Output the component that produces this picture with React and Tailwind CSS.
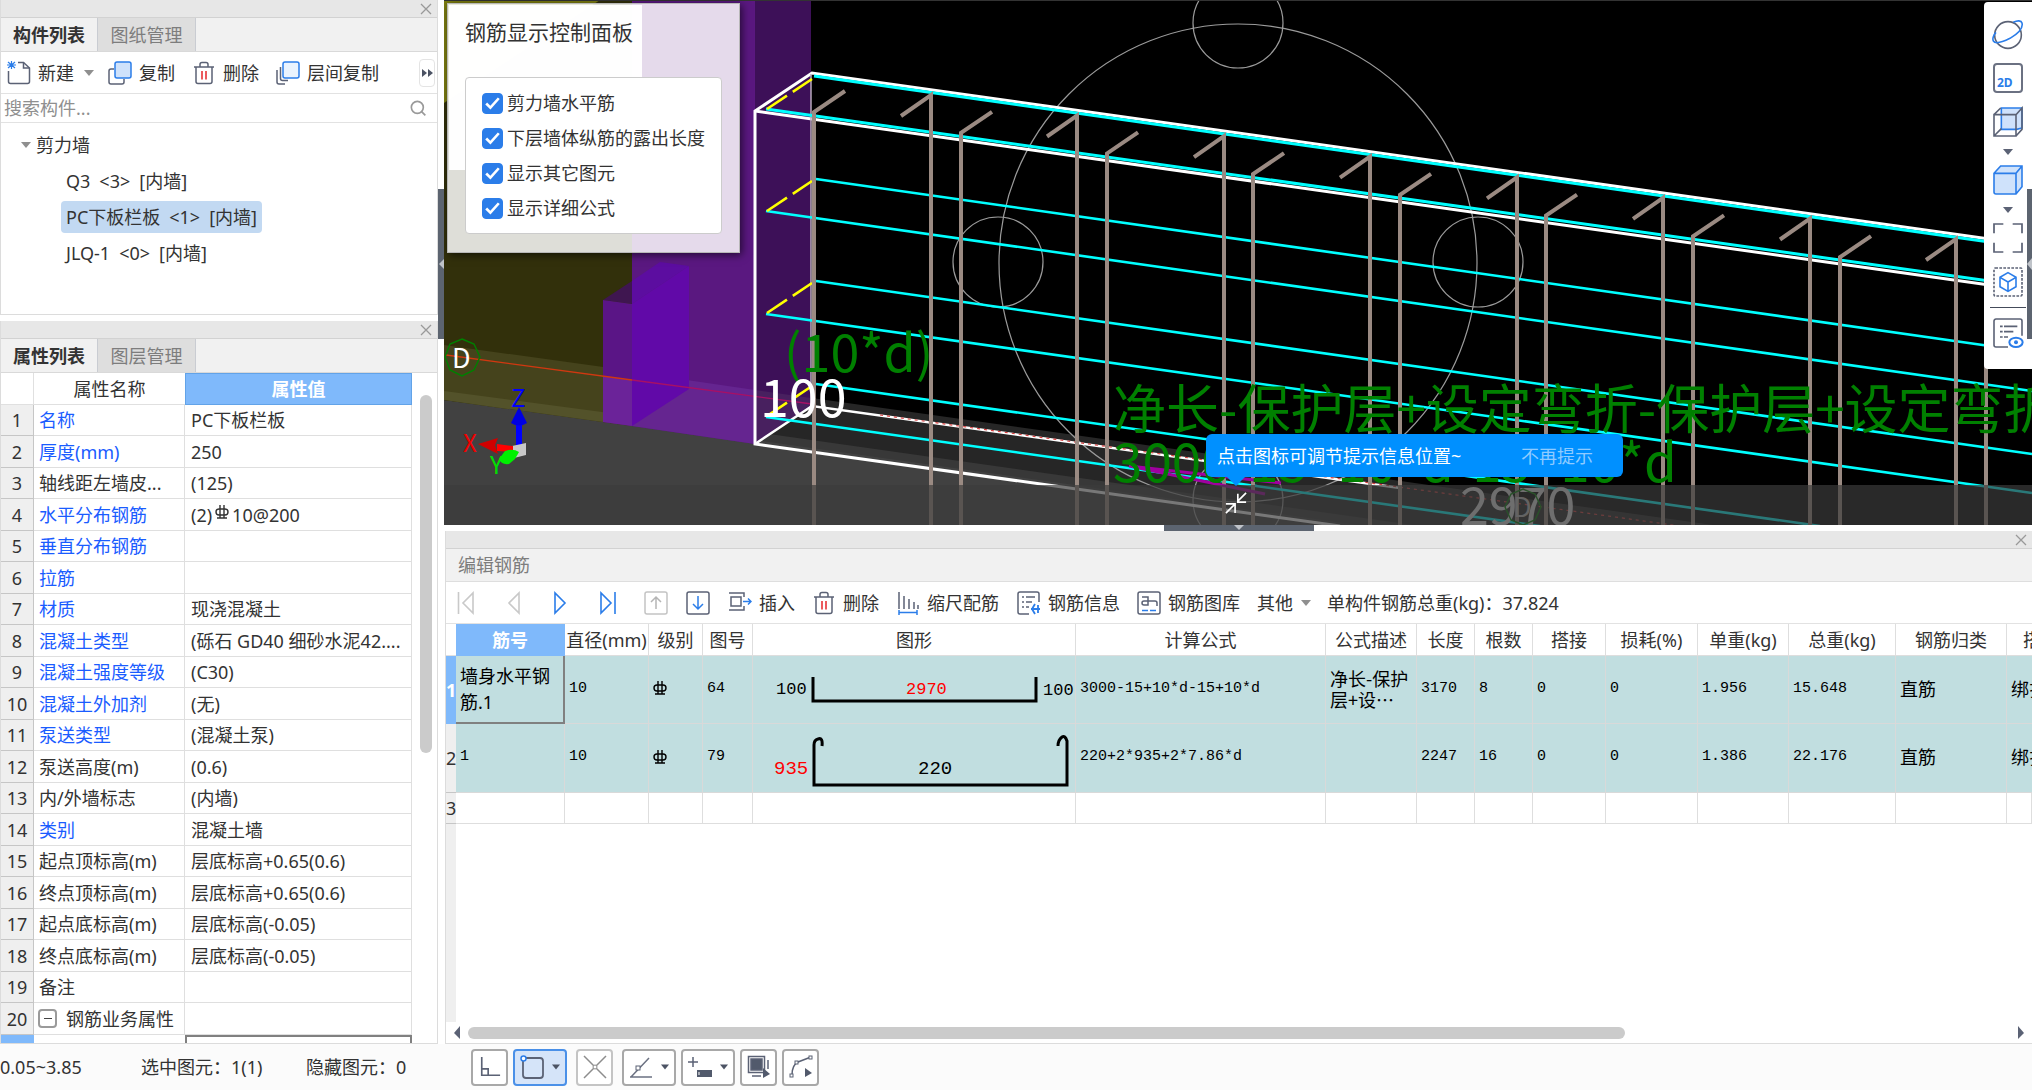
import React, { useState } from "react";

const properties = [
  { name: "名称", value: "PC下板栏板", key: true },
  { name: "厚度(mm)", value: "250", key: true },
  { name: "轴线距左墙皮...", value: "(125)" },
  { name: "水平分布钢筋", value: "rebar", key: true },
  { name: "垂直分布钢筋", value: "", key: true },
  { name: "拉筋", value: "", key: true },
  { name: "材质", value: "现浇混凝土", key: true },
  { name: "混凝土类型", value: "(砾石 GD40 细砂水泥42....", key: true },
  { name: "混凝土强度等级", value: "(C30)", key: true },
  { name: "混凝土外加剂", value: "(无)", key: true },
  { name: "泵送类型", value: "(混凝土泵)", key: true },
  { name: "泵送高度(m)", value: "(0.6)" },
  { name: "内/外墙标志", value: "(内墙)" },
  { name: "类别", value: "混凝土墙", key: true },
  { name: "起点顶标高(m)", value: "层底标高+0.65(0.6)" },
  { name: "终点顶标高(m)", value: "层底标高+0.65(0.6)" },
  { name: "起点底标高(m)", value: "层底标高(-0.05)" },
  { name: "终点底标高(m)", value: "层底标高(-0.05)" },
  { name: "备注", value: "" },
  { name: "钢筋业务属性", value: "", group: true },
];

const components = [
  { name: "Q3", count: "<3>", kind: "[内墙]" },
  { name: "PC下板栏板", count: "<1>", kind: "[内墙]" },
  { name: "JLQ-1", count: "<0>", kind: "[内墙]" },
];

const headers = [
  "直径(mm)", "级别", "图号", "图形", "计算公式", "公式描述", "长度", "根数",
  "搭接", "损耗(%)", "单重(kg)", "总重(kg)", "钢筋归类",
];

const bars = [
  {
    name: "墙身水平钢筋.1",
    shape: "64",
    formula: "3000-15+10*d-15+10*d",
    note: ["净长-保护", "层+设…"],
    length: "3170",
    count: "8",
    unit: "1.956",
    total: "15.648",
  },
  {
    name: "1",
    shape: "79",
    formula: "220+2*935+2*7.86*d",
    note: [],
    length: "2247",
    count: "16",
    unit: "1.386",
    total: "22.176",
  },
];

const mono = "font-['Liberation_Mono','Noto_Sans_CJK_SC',monospace] text-[15px]";

/* ---------- icons ---------- */

const Icon = ({ size = 24, children, className = "" }) => (
  <svg
    width={size}
    height={size}
    viewBox="0 0 24 24"
    fill="none"
    stroke="#5b6275"
    strokeWidth="1.5"
    className={`shrink-0 ${className}`}
    aria-hidden="true"
  >
    {children}
  </svg>
);

const NewIcon = () => (
  <Icon>
    <path d="M1.500 10v10.500a2 2 0 0 0 2 2h17a2 2 0 0 0 2-2V7l-6-5.500H11" />
    <path d="M16.500 1.500V7h6" />
    <path d="M1 1l7 6M8 1L1 7M4.500 0v8M0 4h9" stroke="#2b7de9" strokeWidth="1.200" />
  </Icon>
);

const CopyIcon = () => (
  <Icon>
    <path d="M6 8H3a2 2 0 0 0-2 2v11a2 2 0 0 0 2 2h11a2 2 0 0 0 2-2v-3" />
    <rect x="7" y="1" width="16" height="16" rx="2" fill="#cfe2fb" stroke="#2b7de9" />
  </Icon>
);

const FloorCopyIcon = () => (
  <Icon>
    <path d="M1 9v12a2 2 0 0 0 2 2h6M4.500 6v11.500a2 2 0 0 0 2 2H12" />
    <rect x="7" y="1" width="16" height="16" rx="2" fill="#eaf3fe" stroke="#2b7de9" />
  </Icon>
);

const TrashIcon = () => (
  <Icon>
    <path d="M2 6h20M8 6V3.500a2 2 0 0 1 2-2h4a2 2 0 0 1 2 2V6M4 6v14.500a2 2 0 0 0 2 2h12a2 2 0 0 0 2-2V6" />
    <path d="M10 10v8.500M14 10v8.500" stroke="#e5262b" />
  </Icon>
);

const InsertIcon = () => (
  <Icon>
    <path d="M1 2h15v4M1 19h15v-4M3 6h10v9H3z" />
    <path d="M15 10.500h8M20 7.500l3 3-3 3" stroke="#2b7de9" />
  </Icon>
);

const ScaleIcon = () => (
  <Icon>
    <path d="M3 1v17M8 5v13M13 8v10M18 11v7M22 14v4" />
    <path d="M3 21.500h18M3 19v5M21 19v5" stroke="#2b7de9" />
  </Icon>
);

const InfoIcon = () => (
  <Icon>
    <path d="M22 11V3a2 2 0 0 0-2-2H3a2 2 0 0 0-2 2v18a2 2 0 0 0 2 2h9" />
    <path d="M5 6h2M9 6h9M5 11h2M9 11h6M5 16h2M9 16h3" />
    <path d="M14 18h9M18 13l-3 5 3 5M21 14v8" stroke="#2b7de9" strokeWidth="1.800" />
  </Icon>
);

const LibraryIcon = () => (
  <Icon>
    <rect x="1" y="1" width="22" height="22" rx="2" />
    <path d="M5 6h6v8H7a2 2 0 0 1 0-4h11a2 2 0 0 1 2 2v3" />
    <path d="M5 19.500h6M13 19.500h6" stroke="#2b7de9" />
  </Icon>
);

const CloseIcon = () => (
  <svg width="12" height="12" viewBox="0 0 12 12" stroke="#999" strokeWidth="1.300" aria-hidden="true">
    <path d="M1 1l10 10M11 1L1 11" />
  </svg>
);

const Caret = ({ className = "text-[#8f8f8f]" }) => (
  <svg width="10" height="6" viewBox="0 0 10 6" className={`shrink-0 ${className}`} aria-hidden="true">
    <path d="M0 0h10L5 6z" fill="currentColor" />
  </svg>
);

// Grade symbol for HRB400 bars
const GradeIcon = ({ className = "" }) => (
  <svg
    width="14"
    height="15"
    viewBox="0 0 14 15"
    fill="none"
    stroke="currentColor"
    strokeWidth="1.400"
    className={className}
    role="img"
    aria-label="HRB400"
  >
    <rect x="1" y="4" width="12" height="6" rx="3" />
    <path d="M5 0v13M9 0v13M2 13h10" />
  </svg>
);

/* ---------- shared panel parts ---------- */

const PanelStrip = () => (
  <div className="flex h-[18px] shrink-0 items-center justify-end border-b border-[#d2d2d2] bg-[#e7e7e7] pr-[5px]">
    <button type="button" aria-label="关闭">
      <CloseIcon />
    </button>
  </div>
);

const Tabs = ({ items }) => (
  <div className="flex h-[34px] shrink-0 border-b border-[#d9d9d9] bg-[#f1f1f1]" role="tablist">
    {items.map((item, i) => (
      <button
        key={item}
        type="button"
        role="tab"
        aria-selected={i === 0}
        className={
          i === 0
            ? "w-[97px] border-r border-[#c9ccd2] font-bold text-[#333]"
            : "w-[98px] border-r border-[#c9ccd2] bg-[#dedede] text-[#7d7d7d]"
        }
      >
        {item}
      </button>
    ))}
  </div>
);

const ToolButton = ({ icon, children, className = "" }) => (
  <button type="button" className={`flex shrink-0 items-center gap-[7px] whitespace-nowrap ${className}`}>
    {icon}
    {children}
  </button>
);

/* ---------- left side ---------- */

const ComponentPanel = () => {
  const [selected, setSelected] = useState(1);

  return (
    <section className="flex h-[315px] flex-col border border-t-0 border-[#dcdcdc] bg-white">
      <PanelStrip />
      <Tabs items={["构件列表", "图纸管理"]} />
      <div className="flex h-[42px] items-center border-b border-[#e2e2e2] pl-[6px]">
        <ToolButton icon={<NewIcon />}>新建</ToolButton>
        <Caret className="ml-[10px] text-[#8f8f8f]" />
        <ToolButton icon={<CopyIcon />} className="ml-[14px]">复制</ToolButton>
        <ToolButton icon={<TrashIcon />} className="ml-[17px]">删除</ToolButton>
        <ToolButton icon={<FloorCopyIcon />} className="ml-[17px]">层间复制</ToolButton>
        <button
          type="button"
          aria-label="更多"
          className="mr-[2px] ml-auto flex h-7 w-4 items-center justify-center rounded border border-[#e4e4e4]"
        >
          <svg width="11" height="8" viewBox="0 0 11 8" fill="#4c5364" aria-hidden="true">
            <path d="M0 0l5 4-5 4zM6 0l5 4-5 4z" />
          </svg>
        </button>
      </div>
      <div className="flex h-[29px] items-center border-b border-[#e2e2e2] pr-[11px] pl-[3px]">
        <input
          type="text"
          aria-label="搜索构件"
          placeholder="搜索构件..."
          className="min-w-0 flex-1 outline-none placeholder:text-[#8f8f8f]"
        />
        <Icon size={16}>
          <circle cx="11" cy="11" r="9" stroke="#999" strokeWidth="2.500" />
          <path d="M17 17l6 6" stroke="#999" strokeWidth="2.500" />
        </Icon>
      </div>
      <div className="flex flex-col items-start pt-1">
        <button type="button" className="ml-5 flex h-9 items-center gap-[5px]">
          <Caret />
          剪力墙
        </button>
        {components.map((item, i) => (
          <button
            key={item.name}
            type="button"
            onClick={() => setSelected(i)}
            className={`my-[2px] ml-[60px] flex h-8 items-center gap-[9px] rounded px-[5px] ${
              i === selected ? "bg-[#c2d9f2]" : ""
            }`}
          >
            <span>{item.name}</span>
            <span>{item.count}</span>
            <span>{item.kind}</span>
          </button>
        ))}
      </div>
    </section>
  );
};

const PropertyPanel = () => (
  <section className="flex min-h-0 flex-1 flex-col overflow-hidden border border-t-0 border-[#dcdcdc] bg-white">
    <PanelStrip />
    <Tabs items={["属性列表", "图层管理"]} />
    <div className="flex h-[670px] overflow-hidden">
      <table className="w-[411px] table-fixed border-separate border-spacing-0 self-start">
        <colgroup>
          <col className="w-[33px]" />
          <col className="w-[151px]" />
          <col />
        </colgroup>
        <thead>
          <tr className="h-8">
            <th className="border-r border-b border-[#e0e0e0]" />
            <th className="border-b border-[#e0e0e0] font-normal">属性名称</th>
            <th className="border border-[#62a3e8] bg-[#7fb9fb] font-bold text-white">属性值</th>
          </tr>
        </thead>
        <tbody>
          {properties.map((row, i) => (
            <tr key={row.name} className="odd:h-[31px] even:h-8">
              <td className="border-r border-b border-[#c6c6c6] bg-[#efefef] p-0 text-center">{i + 1}</td>
              <td
                className={`border-r border-b border-[#dfdfdf] p-0 pl-[5px] whitespace-nowrap ${
                  row.key ? "text-[#1a5cff]" : ""
                }`}
              >
                {row.group ? (
                  <span className="flex items-center gap-[9px]">
                    <button
                      type="button"
                      aria-label="折叠"
                      className="-ml-px flex size-[19px] items-center justify-center rounded-sm border-2 border-[#9a9a9a]"
                    >
                      <span className="h-px w-2 bg-[#444]" />
                    </button>
                    {row.name}
                  </span>
                ) : (
                  row.name
                )}
              </td>
              <td className="border-r border-b border-[#dfdfdf] p-0 pl-[6px] whitespace-nowrap">
                {row.value === "rebar" ? (
                  <span className="flex items-center">
                    (2)
                    <GradeIcon className="mx-[3px] mb-1" />
                    10@200
                  </span>
                ) : (
                  row.value
                )}
              </td>
            </tr>
          ))}
          <tr className="h-8">
            <td className="bg-[#7fb9fb]" />
            <td>
              <span className="ml-[12px] block h-full border-l border-[#ccc]" />
            </td>
            <td className="border-2 border-[#808080]" />
          </tr>
        </tbody>
      </table>
      <div className="mt-[22px] ml-2 h-[358px] w-3 rounded-full bg-[#cbcbcb]" />
    </div>
  </section>
);

/* ---------- 3D view ---------- */

// Both ties of a pair: the back one hooks left, the front one hooks right
const backTies = [931, 1077, 1224, 1370, 1517, 1663, 1810, 1956];
const frontTies = [814, 961, 1107, 1253, 1400, 1546, 1693, 1840, 1986];

const Scene = () => (
  <svg
    viewBox="444 0 1588 525"
    preserveAspectRatio="xMinYMin slice"
    className="absolute inset-0 h-full w-full font-['Noto_Sans_CJK_SC',sans-serif]"
    role="img"
    aria-label="三维视图"
  >
    <rect x="444" y="0" width="1588" height="526" fill="#000" />
    {/* floor */}
    <path d="M755 390L1720 526H755z" fill="#262626" />
    <path d="M755 432L1420 526H755z" fill="#383838" />
    <path d="M444 400L755 440L1365 526H444z" fill="#414141" />
    {/* walls */}
    <path d="M444 0H632V426L444 400z" fill="#32300b" />
    <path d="M444 0H600L444 103z" fill="#7b7c10" />
    <path d="M444 345L632 371V426L444 400z" fill="#45431c" />
    <path d="M444 391L632 416V426L444 400z" fill="#53522a" />
    <path d="M632 0H755V444L632 426z" fill="#5a1880" />
    <path d="M632 372L755 390V444L632 426z" fill="#652590" />
    <path d="M755 0H811V406L755 444z" fill="#3d1058" />
    <path d="M755 390L811 398V406L755 444z" fill="#48205f" />
    <path d="M603 300L632 281V304z" fill="#3f1650" />
    <path d="M603 300L632 304V426L603 422z" fill="#5a1586" />
    <path d="M603 376L632 380V426L603 422z" fill="#6b2399" />
    <path d="M632 281L660 262L689 266L632 304z" fill="#5c0da0" />
    <path d="M632 304L689 266V389L632 426z" fill="#6109a8" />
    <path d="M446 355L632 380" stroke="#d03810" strokeWidth="1.300" />
    <path d="M632 380L812 404" stroke="#a81065" strokeWidth="1.300" />

    {/* orbit handles */}
    <g fill="none" stroke="#9b9b9b" strokeWidth="1.200">
      <circle cx="1238" cy="263" r="239" />
      <circle cx="1238" cy="23" r="45" />
      <circle cx="998" cy="262" r="45" />
      <circle cx="1478" cy="262" r="45" />
      <circle cx="1238" cy="500" r="45" />
    </g>

    {/* wall outline */}
    <g fill="none" stroke="#fff" strokeWidth="3">
      <path d="M2032 245L812 73L755 111V444L1340 526" />
      <path d="M755 111L2032 291" />
      <path d="M755 444L812 406L1400 488" strokeWidth="2.500" />
      <path d="M811 74V406" stroke="#b9a9bd" strokeWidth="1.500" />
    </g>
    <path d="M880 415L1680 526" stroke="#d84040" strokeWidth="1.200" strokeDasharray="3 4" />

    {/* horizontal bars */}
    <g fill="none" stroke="#0ff" strokeWidth="2.600">
      <path d="M814 76L2032 248" strokeWidth="3" />
      <path d="M766 109L2032 287" strokeWidth="3" />
      <path d="M816 179L2032 352" />
      <path d="M816 281L2032 454" />
      <path d="M816 384L1820 526" />
      <path d="M766 211L2032 391" />
      <path d="M766 314L2032 493" />
      <path d="M766 417L1540 526" />
    </g>
    <g stroke="#ff0" strokeWidth="2.600" strokeDasharray="24 7">
      <path d="M767 109L812 79" />
      <path d="M767 211L812 181" />
      <path d="M767 313L812 283" />
      <path d="M767 416L812 386" />
    </g>

    {/* ties */}
    <g fill="none" stroke="#9a8a82" strokeWidth="4">
      {backTies.map((x) => {
        const y = 95 + (x - 931) * 0.1405;
        return <path key={x} d={`M${x} 526V${y}L${x - 30} ${y + 21}`} />;
      })}
      {frontTies.map((x) => {
        const y = 112 + (x - 814) * 0.1415;
        return <path key={x} d={`M${x} 526V${y}L${x + 31} ${y - 21}`} />;
      })}
    </g>
    <path d="M1129 466L1281 483M1129 466L1265 494" stroke="#a000a0" strokeWidth="3" />

    {/* dimension texts */}
    <text x="784" y="372" fontSize="52" fill="#008000">(10*d)</text>
    <text x="760" y="417" fontSize="52" fill="#fff">100</text>
    <text x="1113" y="429" fontSize="53" fill="#008000">净长-保护层+设定弯折-保护层+设定弯折</text>
    <text x="1113" y="482" fontSize="53" fill="#008000">3000-15+10*d-15+10*d</text>
    <text x="1460" y="525" fontSize="52" fill="#ddd">2970</text>
    <g fill="none" stroke="#008000" strokeWidth="1.400">
      <path d="M462 339L474 344L480 357L474 370L462 376L450 370L445 357L450 344z" />
      <path d="M1523 489L1535 494L1541 507L1535 520L1523 525L1511 520L1505 507L1511 494z" />
    </g>
    <text x="452" y="368" fontSize="27" fill="#fff">D</text>
    <text x="1513" y="517" fontSize="27" fill="#bbb">D</text>

    {/* axis gizmo */}
    <text x="511" y="407" fontSize="24" fill="#0000ff">Z</text>
    <text x="463" y="452" fontSize="24" fill="#f00000">X</text>
    <text x="490" y="474" fontSize="24" fill="#00e000">Y</text>
    <path d="M516 424h6v22h-6z" fill="#0000ff" />
    <path d="M519 407l8 16q-8 5-16 0z" fill="#0000e0" />
    <path d="M512 446l14-3v12l-12 3z" fill="#c8c8c8" />
    <path d="M497 444l16 2v6l-16-1z" fill="#ff0000" />
    <path d="M478 444l20-6-3 7 3 9z" fill="#d00000" />
    <path d="M519 452q-6-4-14-1l-6 8q2 6 10 5l6-5z" fill="#00f000" />
    <path d="M444 0.500H2032" stroke="#333" />
  </svg>
);

const DisplayOptions = () => {
  const [options, setOptions] = useState([
    { label: "剪力墙水平筋", checked: true },
    { label: "下层墙体纵筋的露出长度", checked: true },
    { label: "显示其它图元", checked: true },
    { label: "显示详细公式", checked: true },
  ]);

  const toggle = (index) =>
    setOptions((prev) => prev.map((o, i) => (i === index ? { ...o, checked: !o.checked } : o)));

  return (
    <div className="absolute top-[3px] left-[3px] w-[293px] border border-[#b8b8b8] bg-white/84 px-[17px] pb-[18px] shadow-[2px_2px_8px_rgba(0,0,0,0.6)]">
      <div className="absolute top-px left-px h-[165px] w-[193px] bg-white/97" />
      <div className="relative">
        <h2 className="flex h-[73px] pt-3 text-[21px] leading-8">钢筋显示控制面板</h2>
        <div className="flex flex-col gap-[3px] rounded border border-[#ccc] bg-white py-[9px] pl-4">
          {options.map((option, i) => (
            <label key={option.label} className="flex h-8 items-center gap-1 text-[18px] whitespace-nowrap">
              <span className="relative flex size-[21px] shrink-0">
                <input
                  type="checkbox"
                  checked={option.checked}
                  onChange={() => toggle(i)}
                  className="peer size-[21px] appearance-none rounded-sm border border-[#2b7de9] checked:bg-[#2b7de9]"
                />
                <svg
                  viewBox="0 0 20 20"
                  className="pointer-events-none absolute inset-0 hidden peer-checked:block"
                  fill="none"
                  stroke="#fff"
                  strokeWidth="2.500"
                  aria-hidden="true"
                >
                  <path d="M4 10l4 4 8-9" />
                </svg>
              </span>
              {option.label}
            </label>
          ))}
        </div>
      </div>
    </div>
  );
};

const ViewTools = () => (
  <div className="absolute top-[2px] right-0 flex h-[367px] w-12 flex-col items-center rounded-l bg-white pt-[17px]">
    <button type="button" aria-label="动态观察">
      <Icon size={32}>
        <circle cx="12" cy="12" r="10" strokeWidth="1.200" />
        <path
          d="M16 2.500c3-1.500 6-1.500 6.500.5 1 4-4 8.500-9 11.500-5 2.500-11 4.500-12.500 2-1-2 .5-5 2-6.500"
          stroke="#2b7de9"
          strokeWidth="1.200"
        />
      </Icon>
    </button>
    <button
      type="button"
      className="mt-3 flex h-[30px] w-[30px] items-end rounded-sm border-2 border-[#6b7182] pb-px pl-[2px] text-[12px] leading-[14px] font-bold text-[#2b7de9]"
    >
      2D
    </button>
    <button type="button" aria-label="视图方向" className="mt-[13px]">
      <Icon size={32}>
        <path d="M7 1.500h15.500v15l-4 1H7z" fill="#cfe2fb" stroke="#2b7de9" strokeWidth="1.200" />
        <path d="M1.500 6.500h16.500v16H1.500zM1.500 6.500l5-5M18 6.500l4.500-5v16l-4.500 5M1.500 22.500l5.500-5.500" strokeWidth="1.200" />
      </Icon>
    </button>
    <Caret className="mt-[11px] text-[#5b6275]" />
    <button type="button" aria-label="显示样式" className="mt-[9px]">
      <Icon size={32}>
        <path
          d="M1.500 7l5-5.500h16v15.500l-4.500 5.500H3a1.500 1.500 0 0 1-1.500-1.500zM1.500 7H18v15.500M18 7l4.500-5.500"
          fill="#cfe2fb"
          stroke="#2b7de9"
          strokeWidth="1.200"
        />
      </Icon>
    </button>
    <Caret className="mt-[11px] text-[#5b6275]" />
    <button type="button" aria-label="全屏" className="mt-[9px]">
      <Icon size={32}>
        <path d="M8.500 1.500h-7v7M15.500 1.500h7v7M8.500 22.500h-7v-7M15.500 22.500h7v-7" strokeWidth="1.300" />
      </Icon>
    </button>
    <button type="button" aria-label="局部三维" className="mt-3">
      <Icon size={32}>
        <rect x="1.500" y="1.500" width="21" height="21" rx="1" strokeDasharray="2 1" strokeWidth="1.200" />
        <path d="M12 5l6 3.500v7L12 19l-6-3.500v-7zM6 8.500l6 3.500 6-3.500M12 12v7" stroke="#2b7de9" strokeWidth="1.200" />
      </Icon>
    </button>
    <div className="mt-[9px] h-px w-9 bg-[#444b5a]" />
    <button type="button" aria-label="显示设置" className="mt-[9px]">
      <Icon size={32}>
        <path d="M22.500 14V3a1.500 1.500 0 0 0-1.500-1.500H3A1.500 1.500 0 0 0 1.500 3v18A1.500 1.500 0 0 0 3 22.500h9" strokeWidth="1.200" />
        <path d="M6 7h2M9 7h10M6 11h2M9 11h7M6 15h2M9 15h3" strokeWidth="1.200" />
        <ellipse cx="18" cy="19" rx="5" ry="3.500" stroke="#2b7de9" fill="#fff" />
        <circle cx="18" cy="19" r="1.500" fill="#2b7de9" stroke="none" />
      </Icon>
    </button>
  </div>
);

const Viewport = () => {
  const [showTip, setShowTip] = useState(true);

  return (
    <section className="relative h-[525px] shrink-0 overflow-hidden bg-black">
      <Scene />
      <div className="absolute inset-x-0 bottom-0 flex h-10 items-center justify-center bg-[#3b3b3b]/69 pb-1">
        <button type="button" aria-label="收起提示" className="mr-1">
          <svg width="22" height="22" viewBox="0 0 24 24" fill="none" stroke="#fff" strokeWidth="1.800">
            <path d="M23 1L14 10M14 2v9h9M1 23l9-9M1 13h10v10" />
          </svg>
        </button>
      </div>
      {showTip && (
        <div className="absolute bottom-12 left-1/2 -ml-8 flex h-[43px] w-[417px] items-center rounded-md bg-[#0090ff] pl-[11px] text-white">
          点击图标可调节提示信息位置~
          <button type="button" onClick={() => setShowTip(false)} className="mr-[30px] ml-auto text-[#8fcbff]">
            不再提示
          </button>
          <svg width="18" height="9" viewBox="0 0 18 9" className="absolute top-full left-[21px]" aria-hidden="true">
            <path d="M0 0h18L9 9z" fill="#0090ff" />
          </svg>
        </div>
      )}
      <DisplayOptions />
      <ViewTools />
      <button
        type="button"
        aria-label="展开右侧面板"
        className="absolute top-[189px] right-0 flex h-[150px] w-[5px] items-center bg-[#5c6470]"
      >
        <svg width="5" height="12" viewBox="0 0 5 12" fill="#bfc3c9" aria-hidden="true">
          <path d="M5 0v12L0 6z" />
        </svg>
      </button>
    </section>
  );
};

/* ---------- rebar table ---------- */

const ShapeStraight = () => (
  <svg width="322" height="67" viewBox="0 0 322 67" fill="none" className={`block ${mono}`}>
    <path d="M60 21V45H283V21" stroke="#000" strokeWidth="3" />
    <g fontSize="17" fill="#000">
      <text x="23" y="38">100</text>
      <text x="290" y="39">100</text>
      <text x="153" y="38" fill="#f00">2970</text>
    </g>
  </svg>
);

const ShapeHooked = () => (
  <svg width="322" height="67" viewBox="0 0 322 67" fill="none" className={`block ${mono}`}>
    <path d="M69 21q1-9-4-7q-4 1-4 6V60H314V16q-2-6-5-4q-4 3-4 9" stroke="#000" strokeWidth="3" />
    <g fontSize="19">
      <text x="21" y="49" fill="#f00">935</text>
      <text x="165" y="49" fill="#000">220</text>
    </g>
  </svg>
);

const RebarToolbar = () => (
  <div className="flex h-[42px] shrink-0 items-center overflow-hidden border-b border-[#e2e2e2] pl-[10px] whitespace-nowrap">
    <button type="button" aria-label="第一条" className="ml-px w-[18px]">
      <svg width="18" height="24" viewBox="0 0 18 24" fill="none" stroke="#c9c9c9" strokeWidth="1.600">
        <path d="M1.500 1v22M16 2v20L6 12z" />
      </svg>
    </button>
    <button type="button" aria-label="上一条" className="ml-8">
      <svg width="14" height="24" viewBox="0 0 14 24" fill="none" stroke="#c9c9c9" strokeWidth="1.600">
        <path d="M12 2v20L2 12z" />
      </svg>
    </button>
    <button type="button" aria-label="下一条" className="ml-8">
      <svg width="14" height="24" viewBox="0 0 14 24" fill="none" stroke="#2b7de9" strokeWidth="1.600">
        <path d="M2 2v20l10-10z" />
      </svg>
    </button>
    <button type="button" aria-label="最后一条" className="ml-8">
      <svg width="18" height="24" viewBox="0 0 18 24" fill="none" stroke="#2b7de9" strokeWidth="1.600">
        <path d="M2 2v20l10-10zM16 1v22" />
      </svg>
    </button>
    <button type="button" aria-label="上移" className="ml-[27px]">
      <Icon>
        <rect x="1" y="1" width="22" height="22" rx="2" stroke="#c4c4c4" />
        <path d="M12 18V6M7 11l5-5 5 5" stroke="#b5b5b5" />
      </Icon>
    </button>
    <button type="button" aria-label="下移" className="ml-[18px]">
      <Icon>
        <rect x="1" y="1" width="22" height="22" rx="2" />
        <path d="M12 5v12M7 13l5 5 5-5" stroke="#2b7de9" />
      </Icon>
    </button>
    <ToolButton icon={<InsertIcon />} className="ml-[18px]">插入</ToolButton>
    <ToolButton icon={<TrashIcon />} className="ml-[17px]">删除</ToolButton>
    <ToolButton icon={<ScaleIcon />} className="ml-[17px]">缩尺配筋</ToolButton>
    <ToolButton icon={<InfoIcon />} className="ml-[18px]">钢筋信息</ToolButton>
    <ToolButton icon={<LibraryIcon />} className="ml-[17px]">钢筋图库</ToolButton>
    <button type="button" className="ml-[17px] flex items-center gap-2">
      其他
      <Caret />
    </button>
    <span className="ml-4">单构件钢筋总重(kg)：37.824</span>
  </div>
);

const RebarPanel = () => {
  const cell = "border-r border-b border-[#d9d9d9] p-0 pb-[2px] pl-[4px]";

  return (
    <section className="mt-[6px] ml-px flex min-h-0 flex-1 flex-col overflow-hidden border border-t-0 border-r-0 border-[#dcdcdc] bg-white">
      <PanelStrip />
      <div className="h-[33px] shrink-0 border-b border-[#dedede] bg-[#f1f1f1] pl-3 leading-8 text-[#7d7d7d]">
        编辑钢筋
      </div>
      <RebarToolbar />
      <div className="flex min-h-0 flex-1 flex-col overflow-hidden">
        <table className="w-full table-fixed border-separate border-spacing-0 text-black">
          <colgroup>
            <col className="w-[10px]" />
            <col className="w-[109px]" />
            <col className="w-[84px]" />
            <col className="w-[54px]" />
            <col className="w-[50px]" />
            <col className="w-[323px]" />
            <col className="w-[250px]" />
            <col className="w-[91px]" />
            <col className="w-[58px]" />
            <col className="w-[58px]" />
            <col className="w-[73px]" />
            <col className="w-[92px]" />
            <col className="w-[91px]" />
            <col className="w-[107px]" />
            <col className="w-[111px]" />
            <col />
          </colgroup>
          <thead className="text-[#333]">
            <tr className="h-8 whitespace-nowrap">
              <th className="border-b border-[#e0e0e0] p-0" />
              <th className="border-r border-b border-[#7fb9fb] bg-[#7fb9fb] p-0 font-bold text-white">筋号</th>
              {headers.map((h) => (
                <th key={h} className="border-r border-b border-[#dedede] p-0 font-normal">
                  {h}
                </th>
              ))}
              <th className="overflow-hidden border-b border-[#dedede] p-0 pl-4 text-left font-normal">搭接形式</th>
            </tr>
          </thead>
          <tbody>
            {bars.map((bar, i) => (
              <tr key={bar.shape} className={i === 0 ? "h-[68px] bg-[#c1dee0]" : "h-[69px] bg-[#c1dee0]"}>
                <td
                  className={
                    i === 0
                      ? "overflow-hidden bg-[#7fb9fb] p-0 text-center font-bold text-white"
                      : "overflow-hidden border-b border-[#c6c6c6] bg-[#efefef] p-0 text-center text-[#333]"
                  }
                >
                  {i + 1}
                </td>
                {i === 0 ? (
                  <td className="border-r-2 border-b-2 border-[#808080] p-0 pl-[4px] leading-[26px]">{bar.name}</td>
                ) : (
                  <td className={`${cell} ${mono}`}>{bar.name}</td>
                )}
                <td className={`${cell} ${mono}`}>10</td>
                <td className={`${cell} pl-2`}>
                  <GradeIcon />
                </td>
                <td className={`${cell} ${mono}`}>{bar.shape}</td>
                <td className="border-r border-b border-[#d9d9d9] p-0">
                  {i === 0 ? <ShapeStraight /> : <ShapeHooked />}
                </td>
                <td className={`${cell} ${mono}`}>{bar.formula}</td>
                <td className={`${cell} font-['Noto_Sans_CJK_SC',sans-serif] leading-[21px] whitespace-nowrap`}>
                  {bar.note.map((line) => (
                    <div key={line}>{line}</div>
                  ))}
                </td>
                <td className={`${cell} ${mono}`}>{bar.length}</td>
                <td className={`${cell} ${mono}`}>{bar.count}</td>
                <td className={`${cell} ${mono}`}>0</td>
                <td className={`${cell} ${mono}`}>0</td>
                <td className={`${cell} ${mono}`}>{bar.unit}</td>
                <td className={`${cell} ${mono}`}>{bar.total}</td>
                <td className={cell}>直筋</td>
                <td className="overflow-hidden border-b border-[#d9d9d9] p-0 pb-[2px] pl-[4px] whitespace-nowrap">
                  绑扎
                </td>
              </tr>
            ))}
            <tr className="h-[31px]">
              <td className="border-b border-[#c6c6c6] bg-[#efefef] p-0 text-center text-[#333]">3</td>
              {Array.from({ length: 15 }, (_, i) => (
                <td key={i} className="border-r border-b border-[#dedede] p-0" />
              ))}
            </tr>
          </tbody>
        </table>
        <div className="w-[10px] flex-1 bg-[#efefef]" />
      </div>
      <div className="flex h-[21px] shrink-0 items-center px-2">
        <svg width="6" height="13" viewBox="0 0 6 13" fill="#5b6275" aria-hidden="true">
          <path d="M6 0v13L0 7z" />
        </svg>
        <div className="flex flex-1 px-2">
          <div className="h-3 w-[75%] rounded-full bg-[#cbcbcb]" />
        </div>
        <svg width="6" height="13" viewBox="0 0 6 13" fill="#5b6275" aria-hidden="true">
          <path d="M0 0v13l6-6z" />
        </svg>
      </div>
    </section>
  );
};

/* ---------- status bar ---------- */

const StatusButton = ({ label, wide, active, muted, children, className = "" }) => (
  <button
    type="button"
    aria-label={label}
    className={`flex h-[37px] items-center justify-center rounded border-2 ${wide ? "w-[54px] gap-2" : "w-[37px]"} ${
      active ? "border-[#4a90e8] bg-[#d5e4f9]" : muted ? "border-[#c4c4c4] bg-white" : "border-[#a8a8a8] bg-white"
    } ${className}`}
  >
    {children}
    {wide && <Caret className="w-2 text-[#4c5364]" />}
  </button>
);

const StatusBar = () => (
  <footer className="flex h-[46px] shrink-0 items-center bg-[#fbfbfb]">
    <div className="flex w-[471px] shrink-0 whitespace-nowrap">
      <span className="w-[141px]">0.05~3.85</span>
      <span className="w-[165px]">选中图元：1(1)</span>
      <span>隐藏图元：0</span>
    </div>
    <StatusButton label="正交">
      <Icon size={22}>
        <path d="M3 1v20h20M3 14h7v7" strokeWidth="1.800" />
      </Icon>
    </StatusButton>
    <StatusButton label="捕捉" wide active className="ml-[5px]">
      <Icon>
        <rect x="3" y="3" width="20" height="20" rx="3" strokeWidth="1.800" />
        <circle cx="3.500" cy="3.500" r="2.500" fill="#fff" stroke="#2b7de9" />
      </Icon>
    </StatusButton>
    <StatusButton label="交点" muted className="ml-[9px]">
      <Icon>
        <path d="M1 1l22 22M23 1L1 23" stroke="#8d8d8d" strokeWidth="1.500" />
        <circle cx="12" cy="12" r="2" fill="#fff" stroke="#8d8d8d" strokeWidth="1" />
      </Icon>
    </StatusButton>
    <StatusButton label="角度" wide className="ml-[9px]">
      <Icon>
        <path d="M2 22L20 3M1 22h22" stroke="#6b7182" />
        <rect x="7" y="11" width="4" height="4" fill="#fff" strokeWidth="1" />
      </Icon>
    </StatusButton>
    <StatusButton label="点加长度" wide className="ml-[5px]">
      <Icon>
        <path d="M5 2v10M0 7h10" />
        <rect x="9" y="15" width="15" height="7" fill="#525a6c" stroke="none" />
        <path d="M11 17v3" stroke="#fff" strokeWidth="1" />
      </Icon>
    </StatusButton>
    <StatusButton label="窗选" className="ml-[5px]">
      <Icon>
        <rect x="1.500" y="1.500" width="16" height="16" />
        <rect x="4" y="4" width="11" height="11" fill="#525a6c" />
        <path d="M5 21h9M21 5v9" />
        <path d="M16 13v10l7-4z" fill="#525a6c" stroke="none" />
      </Icon>
    </StatusButton>
    <StatusButton label="折线" className="ml-[5px]">
      <Icon>
        <path d="M3 20q0-10 6-13l13-5" />
        <rect x="1" y="19" width="3" height="3" fill="#fff" strokeWidth="1" />
        <rect x="6" y="6" width="3" height="3" fill="#fff" strokeWidth="1" />
        <rect x="20" y="1" width="3" height="3" fill="#fff" strokeWidth="1" />
        <path d="M16 13v9l7-4z" fill="#525a6c" stroke="none" />
      </Icon>
    </StatusButton>
  </footer>
);

const App = () => {
  return (
    <div className="flex min-h-screen flex-col overflow-hidden bg-white font-['Noto_Sans','Noto_Sans_CJK_SC',sans-serif] text-[18px] leading-6 text-[#333]">
      <main className="flex min-h-0 flex-1">
        <aside className="flex w-[438px] shrink-0 flex-col">
          <ComponentPanel />
          <div className="h-[6px]" />
          <PropertyPanel />
        </aside>
        <div className="w-[6px] shrink-0 pt-[189px]">
          <button
            type="button"
            aria-label="收起左侧面板"
            className="flex h-[150px] w-full items-center justify-end bg-[#5c6470]"
          >
            <svg width="5" height="10" viewBox="0 0 5 10" fill="#bfc3c9" aria-hidden="true">
              <path d="M5 0v10L0 5z" />
            </svg>
          </button>
        </div>
        <div className="flex min-w-0 flex-1 flex-col">
          <Viewport />
          <div className="relative">
            <button
              type="button"
              aria-label="收起下方面板"
              className="absolute top-0 left-1/2 -ml-[74px] flex h-[6px] w-[150px] justify-center bg-[#5c6470]"
            >
              <svg width="10" height="5" viewBox="0 0 10 5" fill="#bfc3c9" aria-hidden="true">
                <path d="M0 0h10L5 5z" />
              </svg>
            </button>
          </div>
          <RebarPanel />
        </div>
      </main>
      <StatusBar />
    </div>
  );
};

export default App;
